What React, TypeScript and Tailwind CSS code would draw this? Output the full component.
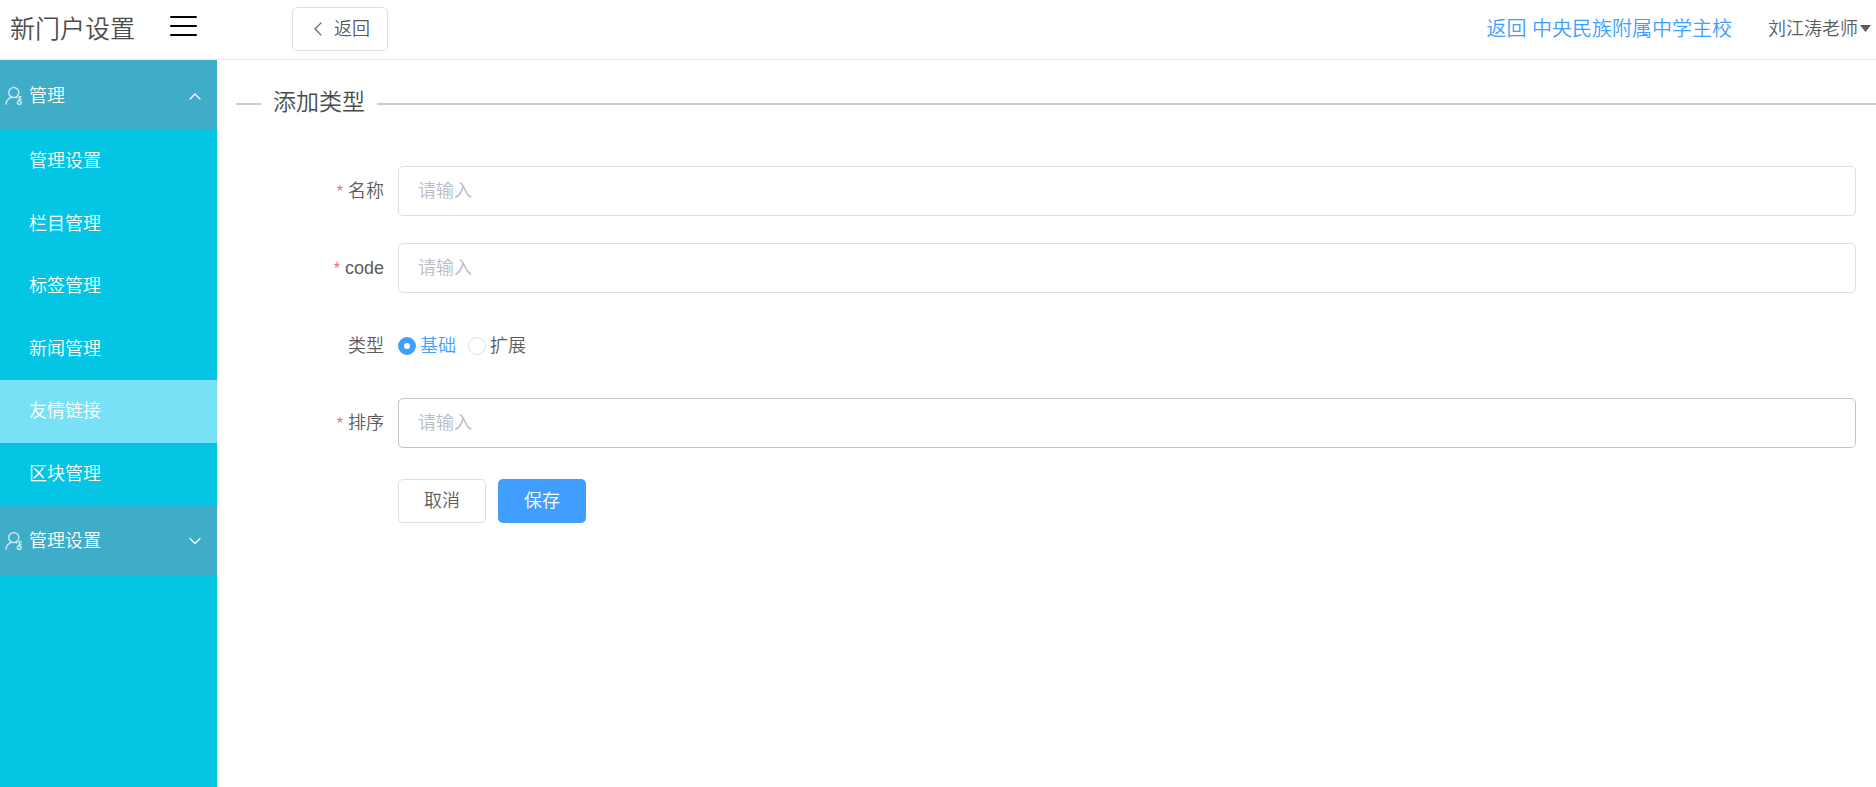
import { useState } from "react";

const menuItems = ["管理设置", "栏目管理", "标签管理", "新闻管理", "友情链接", "区块管理"];

function UserKeyIcon() {
  return (
    <svg
      className="h-5 w-[18px] shrink-0"
      viewBox="0 0 18 20"
      fill="none"
      stroke="currentColor"
      strokeWidth="1.5"
      aria-hidden="true"
    >
      <circle cx="8.8" cy="6.6" r="5" />
      <path d="M6.6 11.2C3.200 12.300 1.200 15 1 18.600" />
      <path d="M10.800 11.400l1.200 .8" />
      <circle cx="14.300" cy="16.600" r="1.900" />
      <path d="M14.300 14.700V10.800h2.400M14.300 13.200h2.200" />
    </svg>
  );
}

function Chevron({ up }: { up: boolean }) {
  return (
    <svg
      className="h-2 w-3"
      viewBox="0 0 12 8"
      fill="none"
      stroke="currentColor"
      strokeWidth="1.2"
      strokeLinecap="round"
      strokeLinejoin="round"
      aria-hidden="true"
    >
      <path d={up ? "M1 7L6 2l5 5" : "M1 1.500l5 5 5-5"} />
    </svg>
  );
}

function GroupHeader({ label, open, onClick }: { label: string; open: boolean; onClick: () => void }) {
  return (
    <button
      type="button"
      aria-expanded={open}
      onClick={onClick}
      className="flex h-[70px] w-full items-center bg-[#40adc8] pt-0.5 pr-4 pl-[5px] text-left"
    >
      <span className="flex text-white/70">
        <UserKeyIcon />
      </span>
      <span className="ml-1.5 flex-1">{label}</span>
      <Chevron up={open} />
    </button>
  );
}

function Label({ htmlFor, text, required }: { htmlFor: string; text: string; required?: boolean }) {
  return (
    <label htmlFor={htmlFor} className="w-[181px] shrink-0 pr-[14px] text-right">
      {required && <span className="mr-[5px] text-base text-[#f56c6c]">*</span>}
      {text}
    </label>
  );
}

function TextRow({ id, label, strong }: { id: string; label: string; strong?: boolean }) {
  return (
    <div className="flex items-center">
      <Label htmlFor={id} text={label} required />
      <input
        id={id}
        type="text"
        placeholder="请输入"
        className={`h-[50px] min-w-0 flex-1 rounded-[5px] border bg-white px-[19px] outline-none placeholder:text-[#b9bdc6] ${
          strong ? "border-[#c0c4cc]" : "border-[#dcdfe6]"
        }`}
      />
    </div>
  );
}

function RadioOption({
  id,
  label,
  checked,
  onChange,
}: {
  id: string;
  label: string;
  checked: boolean;
  onChange: () => void;
}) {
  return (
    <label htmlFor={id} className={`flex items-center gap-1 ${checked ? "text-[#409eff]" : ""}`}>
      <input
        id={id}
        type="radio"
        name="kind"
        checked={checked}
        onChange={onChange}
        className="size-[18px] appearance-none rounded-full border border-[#dcdfe6] bg-white checked:border-[6px] checked:border-[#409eff]"
      />
      {label}
    </label>
  );
}

export default function App() {
  const [kind, setKind] = useState("base");
  const [firstOpen, setFirstOpen] = useState(true);
  const [secondOpen, setSecondOpen] = useState(false);

  return (
    <div className="flex min-h-screen flex-col bg-white font-['Liberation_Sans','Noto_Sans_CJK_SC',sans-serif] text-[18px] leading-6 font-[350] text-[#5a5c60]">
      <header className="flex h-[60px] items-center border-b border-[#e4e4e4] pr-[5px] pb-[2px] pl-[10px]">
        <h1 className="text-[25px] leading-8 text-[#4c4c4c]">新门户设置</h1>
        <button type="button" aria-label="菜单" className="ml-[35px] pb-[6px] text-black">
          <svg className="h-[22px] w-[27px]" viewBox="0 0 27 22" stroke="currentColor" strokeWidth="2" strokeLinecap="round">
            <path d="M1 2h25M1 11h25M1 20h25" />
          </svg>
        </button>
        <button
          type="button"
          className="ml-[95px] flex h-11 w-24 items-center justify-center gap-3 rounded-[5px] border border-[#dcdfe6] bg-white pl-1"
        >
          <svg className="h-[14px] w-2" viewBox="0 0 8 14" fill="none" stroke="currentColor" strokeWidth="1.2" aria-hidden="true">
            <path d="M7.3 .7L1 7l6.3 6.3" />
          </svg>
          返回
        </button>
        <a href="#school" className="ml-auto text-[20px] text-[#409eff]">
          返回 中央民族附属中学主校
        </a>
        <button type="button" className="ml-9 flex items-center gap-0.5">
          刘江涛老师
          <svg className="h-[7px] w-[11px]" viewBox="0 0 11 7" fill="currentColor" aria-hidden="true">
            <path d="M0 0h11L5.5 7z" />
          </svg>
        </button>
      </header>

      <div className="flex flex-1">
        <nav className="w-[217px] shrink-0 bg-[#04c5e4] text-white">
          <GroupHeader label="管理" open={firstOpen} onClick={() => setFirstOpen(!firstOpen)} />
          {firstOpen && (
            <ul className="grid h-[375px] auto-rows-fr">
              {menuItems.map((item) => (
                <li key={item} className="flex">
                  <a
                    href="#menu"
                    className={`flex flex-1 items-center pl-[29px] ${item === "友情链接" ? "bg-[#78e1f6]" : ""}`}
                  >
                    {item}
                  </a>
                </li>
              ))}
            </ul>
          )}
          <GroupHeader label="管理设置" open={secondOpen} onClick={() => setSecondOpen(!secondOpen)} />
        </nav>

        <main className="min-w-0 flex-1 pt-[26px]">
          <div className="flex items-center gap-3 pl-[19px]">
            <span className="mt-1 h-0.5 w-[25px] bg-[#ccc]" />
            <h2 className="text-[23px] leading-8 text-[#4c4c4c]">添加类型</h2>
            <span className="mt-1 h-0.5 flex-1 bg-[#ccc]" />
          </div>

          <form className="mt-12 flex flex-col gap-[27px] pr-5" onSubmit={(e) => e.preventDefault()}>
            <TextRow id="name" label="名称" />
            <TextRow id="code" label="code" />
            <div className="flex h-[51px] items-center">
              <Label htmlFor="kind-base" text="类型" />
              <div className="flex gap-3">
                <RadioOption id="kind-base" label="基础" checked={kind === "base"} onChange={() => setKind("base")} />
                <RadioOption id="kind-ext" label="扩展" checked={kind === "ext"} onChange={() => setKind("ext")} />
              </div>
            </div>
            <TextRow id="order" label="排序" strong />
            <div className="flex h-[51px] items-center gap-3 pl-[181px]">
              <button type="button" className="h-11 w-[88px] rounded-[5px] border border-[#dcdfe6] bg-white">
                取消
              </button>
              <button type="submit" className="h-11 w-[88px] rounded-[5px] bg-[#409eff] text-white">
                保存
              </button>
            </div>
          </form>
        </main>
      </div>
    </div>
  );
}
